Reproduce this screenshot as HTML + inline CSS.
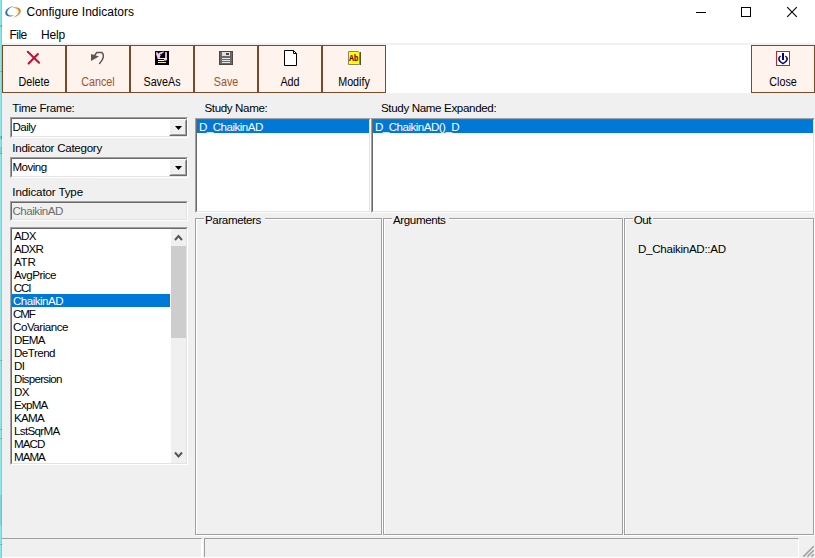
<!DOCTYPE html>
<html>
<head>
<meta charset="utf-8">
<title>Configure Indicators</title>
<style>
html,body{margin:0;padding:0;}
body{width:815px;height:558px;overflow:hidden;background:#f0f0f0;position:relative;font-family:"Liberation Sans",sans-serif;font-size:11px;color:#000;}
.abs{position:absolute;}
#strip{left:0;top:0;width:2px;height:558px;background:linear-gradient(to right,#92e8ea 0,#88e0e3 55%,#6cc2c7 100%);}
#titlebar{left:2px;top:0;width:813px;height:45px;background:#fff;}
#title{left:26.5px;top:4px;font-size:12px;line-height:16px;white-space:nowrap;}
.menu{top:27px;font-size:12px;line-height:16px;white-space:nowrap;}
#toolbar{left:2px;top:43px;width:813px;height:50px;background:#fff;border-top:2px solid #f1f1f1;box-sizing:border-box}
.tb{top:45px;width:62px;height:46px;background:#fef3ed;border:1px solid #7b4b27;}
.tb span{position:absolute;left:0;width:100%;top:29px;text-align:center;font-size:12px;line-height:14px;transform:scaleX(0.895);}
.tb svg{position:absolute;}
.lbl{white-space:nowrap;line-height:13px;font-size:11.6px;letter-spacing:-0.18px;margin-top:-1px}
.sk{box-sizing:border-box;background:#fff;border:1px solid;border-color:#a0a0a0 #fff #fff #a0a0a0;}
.sk i{position:absolute;left:0;top:0;right:0;bottom:0;border:1px solid;border-color:#696969 #e3e3e3 #e3e3e3 #696969;}
.cb{width:17px;height:17px;box-sizing:border-box;background:#f0f0f0;border:1px solid;border-color:#fff #696969 #696969 #fff;}
.cb i{position:absolute;left:0;top:0;right:0;bottom:0;border:1px solid;border-color:#f0f0f0 #a0a0a0 #a0a0a0 #f0f0f0;}
.t{white-space:nowrap;line-height:13px;height:13px;font-size:11.6px;letter-spacing:-0.5px;margin-top:-1px}
.row{height:13px;box-sizing:border-box;padding:0 0 0 2px;line-height:13px;white-space:nowrap;font-size:11.6px;letter-spacing:-0.53px;}
.sel{background:#0078d7;color:#fff;}
.gbg{box-sizing:border-box;border:1px solid #a0a0a0;}
.gbw{box-sizing:border-box;border:1px solid #fff;}
.gbl{margin-top:-1px;background:#f0f0f0;line-height:13px;padding:0 4px 0 1px;white-space:nowrap;font-size:11.6px;letter-spacing:-0.4px;}
</style>
</head>
<body>
<div id="strip" class="abs"></div>
<div class="abs" style="left:0;top:25px;width:2px;height:2px;background:linear-gradient(to right,#8adfe2,#3a8f8a)"></div><div class="abs" style="left:0;top:71px;width:2px;height:1px;background:linear-gradient(to right,#8adfe2,#3a8f8a)"></div><div class="abs" style="left:0;top:136px;width:2px;height:3px;background:linear-gradient(to right,#8adfe2,#2f8c84)"></div><div class="abs" style="left:0;top:147px;width:2px;height:6px;background:linear-gradient(to right,#8adfe2,#5ab6c6)"></div><div class="abs" style="left:0;top:153px;width:2px;height:1px;background:linear-gradient(to right,#8adfe2,#2a8585)"></div><div class="abs" style="left:0;top:360px;width:2px;height:1px;background:linear-gradient(to right,#8adfe2,#3a8f8a)"></div><div class="abs" style="left:0;top:429px;width:2px;height:1px;background:linear-gradient(to right,#8adfe2,#3a8f8a)"></div><div class="abs" style="left:0;top:438px;width:2px;height:1px;background:linear-gradient(to right,#8adfe2,#3a8f8a)"></div><div class="abs" style="left:0;top:495px;width:2px;height:30px;background:linear-gradient(to right,#8adfe2,#66bcc4)"></div><div class="abs" style="left:0;top:544px;width:2px;height:1px;background:linear-gradient(to right,#8adfe2,#3a8f8a)"></div>
<div id="titlebar" class="abs"></div>
<svg class="abs" style="left:0;top:0" width="26" height="22" viewBox="0 0 26 22">
  <path d="M14 6 C9 6.5 4.5 10 5.3 13.5 C6 16.5 10 17.3 14.5 15.2 C11 16 8 15.5 7.3 13 C6.7 10.5 10 7 14 6 Z" fill="#2f75b8"/>
  <path d="M11 8.3 C15 6.5 20 7 20.8 10.5 C21.3 13.5 17 17 12.5 17.7 C16 16.3 19.2 13.5 18.6 11 C18 8.3 14.5 7.5 11 8.3 Z" fill="#e0872f"/>
</svg>
<div id="title" class="abs">Configure Indicators</div>
<!-- window controls -->
<svg class="abs" style="left:690px;top:0" width="125" height="24" viewBox="690 0 125 24">
  <rect x="696" y="12" width="10" height="1" fill="#000"/>
  <rect x="741.5" y="7.5" width="9" height="9" fill="none" stroke="#000" stroke-width="1"/>
  <path d="M787.2 7.2 L796.8 16.8 M796.8 7.2 L787.2 16.8" stroke="#000" stroke-width="1.1"/>
</svg>
<div class="abs menu" style="left:9.5px;letter-spacing:-0.55px">File</div>
<div class="abs menu" style="left:41px;letter-spacing:-0.15px">Help</div>

<div id="toolbar" class="abs"></div>
<div class="abs tb" style="left:2px"><span>Delete</span></div>
<div class="abs tb" style="left:66px"><span style="color:#a0522d">Cancel</span></div>
<div class="abs tb" style="left:130px"><span>SaveAs</span></div>
<div class="abs tb" style="left:194px"><span style="color:#a0522d">Save</span></div>
<div class="abs tb" style="left:258px"><span>Add</span></div>
<div class="abs tb" style="left:322px"><span>Modify</span></div>
<div class="abs tb" style="left:751px"><span>Close</span></div>


<svg class="abs" style="left:0;top:45px" width="815" height="30" viewBox="0 45 815 30">
  <!-- delete X -->
  <path d="M27.8 51.8 L39.1 62.7 M37.9 54 L28.6 63.5" stroke="#c01030" stroke-width="2" stroke-linecap="round" fill="none"/>
  <!-- cancel/undo -->
  <path d="M91 54 L91 61 L99 56.6 Z" fill="#5a5454"/>
  <path d="M94.8 55.2 L96.6 52.6 H102 C104.2 54.5 104.2 58.5 99.6 63.4" stroke="#5a5454" stroke-width="1.5" fill="none" stroke-linecap="round" stroke-linejoin="round"/>
  <!-- saveas -->
  <rect x="155" y="51" width="14" height="14" fill="#000"/>
  <path d="M156 52.2 L157.5 52.2 L158.4 53.7 L159.6 52.6 L163.6 51.4 L163.8 52.4 L162 53.5 L160.5 55.4 L159.6 58 L157.4 58 L156.3 55 Z" fill="#f2c6f2"/>
  <rect x="160.3" y="54" width="1" height="1" fill="#000"/>
  <rect x="165.1" y="52.1" width="1.8" height="8" fill="#f2c6f2"/>
  <rect x="157.5" y="58" width="9.2" height="1" fill="#f6dcf6"/>
  <rect x="164" y="59" width="2.6" height="1.6" fill="#f2c6f2"/>
  <rect x="158" y="60" width="6" height="1" fill="#fff"/>
  <rect x="158" y="62" width="8" height="1" fill="#f0f070"/>
  <!-- save (disabled) -->
  <rect x="219.5" y="51.5" width="13" height="13" fill="#6a6868" stroke="#4e4848"/>
  <rect x="222" y="52" width="8" height="4" fill="#dedede"/>
  <rect x="226" y="53" width="3" height="2" fill="#484848"/>
  <rect x="222" y="58" width="8" height="1" fill="#e8e8e8"/>
  <rect x="222" y="60" width="8" height="1" fill="#e8e8e8"/>
  <rect x="222" y="62" width="8" height="1" fill="#e8e8e8"/>
  <!-- add -->
  <path d="M284.5 50.5 H293.5 L296.5 53.5 V65.5 H284.5 Z" fill="#fff" stroke="#000" stroke-width="1"/>
  <path d="M293.5 50.5 V53.5 H296.5" fill="none" stroke="#000" stroke-width="1"/>
  <!-- modify -->
  <path d="M348.5 51.5 H358 L359.5 52.5 V64.5 H348.5 Z" fill="#ffff00" stroke="#8a8a60" stroke-width="1"/>
  <rect x="360" y="52" width="1" height="13" fill="#505040"/>
  <text x="349" y="61" font-family="Liberation Sans, sans-serif" font-weight="bold" font-size="8.6" fill="#700000" stroke="#700000" stroke-width="0.2" textLength="9.4" lengthAdjust="spacingAndGlyphs">Ab</text>
  <!-- close -->
  <rect x="776.5" y="51.5" width="13" height="14" fill="#fff" stroke="#c02424" stroke-width="1"/>
  <rect x="782" y="53" width="2" height="7" fill="#000080"/>
  <path d="M780.6 56 C777.8 58 778.3 61.5 783 63.6 C787.7 61.5 788.2 58 785.4 56" fill="none" stroke="#000080" stroke-width="1.5"/>
</svg>

<!-- left column -->
<div class="abs lbl" style="left:12.3px;top:102px;letter-spacing:-0.28px">Time Frame:</div>
<div class="abs sk" style="left:10px;top:117px;width:178px;height:21px"><i></i></div>
<div class="abs t" style="left:12.4px;top:121px">Daily</div>
<div class="abs cb" style="left:169px;width:18px;top:119px"><i></i></div>
<svg class="abs" style="left:175px;top:126px" width="7" height="4"><path d="M0 0 H7 L3.5 4 Z" fill="#000"/></svg>
<div class="abs lbl" style="left:12.3px;top:142px;letter-spacing:-0.285px">Indicator Category</div>
<div class="abs sk" style="left:10px;top:157px;width:178px;height:21px"><i></i></div>
<div class="abs t" style="left:12.4px;top:161px">Moving</div>
<div class="abs cb" style="left:169px;width:18px;top:159px"><i></i></div>
<svg class="abs" style="left:175px;top:166px" width="7" height="4"><path d="M0 0 H7 L3.5 4 Z" fill="#000"/></svg>
<div class="abs lbl" style="left:12.3px;top:186px;letter-spacing:-0.14px">Indicator Type</div>
<div class="abs sk" style="left:10px;top:201px;width:178px;height:20px;background:#f0f0f0"><i></i></div>
<div class="abs t" style="left:12.5px;top:205px;color:#6d6d6d">ChaikinAD</div>

<div class="abs sk" style="left:10px;top:227px;width:178px;height:238px"><i></i></div>
<div class="abs row" style="left:12px;top:229px;letter-spacing:-0.68px">ADX</div>
<div class="abs row" style="left:12px;top:242px;letter-spacing:-0.75px">ADXR</div>
<div class="abs row" style="left:12px;top:255px;letter-spacing:-0.25px">ATR</div>
<div class="abs row" style="left:12px;top:268px">AvgPrice</div>
<div class="abs row" style="left:12px;top:281px;letter-spacing:-1.15px;padding-left:1.7px">CCI</div>
<div class="abs row sel" style="left:12px;top:294px;width:158px;letter-spacing:-0.53px;padding-left:1px">ChaikinAD</div>
<div class="abs row" style="left:12px;top:307px;letter-spacing:-1.2px;padding-left:1px">CMF</div>
<div class="abs row" style="left:12px;top:320px;letter-spacing:-0.47px;padding-left:1px">CoVariance</div>
<div class="abs row" style="left:12px;top:333px;letter-spacing:-0.7px">DEMA</div>
<div class="abs row" style="left:12px;top:346px">DeTrend</div>
<div class="abs row" style="left:12px;top:359px">DI</div>
<div class="abs row" style="left:12px;top:372px;letter-spacing:-0.7px">Dispersion</div>
<div class="abs row" style="left:12px;top:385px">DX</div>
<div class="abs row" style="left:12px;top:398px;letter-spacing:-0.76px">ExpMA</div>
<div class="abs row" style="left:12px;top:411px;letter-spacing:-0.73px">KAMA</div>
<div class="abs row" style="left:12px;top:424px;letter-spacing:-0.66px">LstSqrMA</div>
<div class="abs row" style="left:12px;top:437px;letter-spacing:-0.96px">MACD</div>
<div class="abs row" style="left:12px;top:450px;letter-spacing:-1.0px">MAMA</div>
<div class="abs" style="left:171px;top:229px;width:15px;height:234px;background:#f0f0f0"></div>
<div class="abs" style="left:171px;top:246px;width:15px;height:92px;background:#cdcdcd"></div>
<svg class="abs" style="left:171px;top:229px" width="15" height="17"><path d="M4 11 L7.5 7.1 L11 11" fill="none" stroke="#555" stroke-width="2"/></svg>
<svg class="abs" style="left:171px;top:446px" width="15" height="17"><path d="M4 6.5 L7.5 10.4 L11 6.5" fill="none" stroke="#555" stroke-width="2"/></svg>

<!-- study name -->
<div class="abs lbl" style="left:204.5px;top:102px;letter-spacing:-0.375px">Study Name:</div>
<div class="abs sk" style="left:195px;top:118px;width:176px;height:95px"><i></i></div>
<div class="abs row sel" style="left:197px;top:120px;width:172px">D_ChaikinAD</div>
<div class="abs lbl" style="left:381px;top:102px;letter-spacing:-0.36px">Study Name Expanded:</div>
<div class="abs sk" style="left:371px;top:118px;width:444px;height:95px"><i></i></div>
<div class="abs row sel" style="left:373px;top:120px;width:440px">D_ChaikinAD()_D</div>

<!-- group boxes -->
<div class="abs gbw" style="left:196px;top:219px;width:187px;height:317px"></div>
<div class="abs gbg" style="left:195px;top:218px;width:187px;height:317px"></div>
<div class="abs gbl" style="left:204px;top:214px">Parameters</div>
<div class="abs gbw" style="left:384px;top:219px;width:240px;height:317px"></div>
<div class="abs gbg" style="left:383px;top:218px;width:240px;height:317px"></div>
<div class="abs gbl" style="left:392px;top:214px">Arguments</div>
<div class="abs gbw" style="left:625px;top:219px;width:190px;height:317px"></div>
<div class="abs gbg" style="left:624px;top:218px;width:190px;height:317px"></div>
<div class="abs gbl" style="left:632.7px;top:214px;padding-right:2px">Out</div>
<div class="abs lbl" style="left:638px;top:243px;letter-spacing:-0.29px">D_ChaikinAD::AD</div>

<!-- status bar -->
<div class="abs" style="left:2px;top:538px;width:201px;height:20px;border-top:1px solid #a0a0a0;border-right:2px solid #fff;border-bottom:1px solid #fff;box-sizing:border-box"></div>
<div class="abs" style="left:204px;top:557px;width:595px;height:1px;background:#fff"></div>
<div class="abs" style="left:204px;top:538px;width:595px;height:19px;border-top:1px solid #a0a0a0;border-left:1px solid #a0a0a0;border-right:1px solid #fff;box-sizing:border-box"></div>
<svg class="abs" style="left:801px;top:544px" width="14" height="14"><path d="M2.4 12.6 L12.8 2.2 M6.4 12.6 L12.8 6.2 M10.4 12.6 L12.8 10.2" stroke="#a0a0a0" stroke-width="1.6"/></svg>
</body>
</html>
